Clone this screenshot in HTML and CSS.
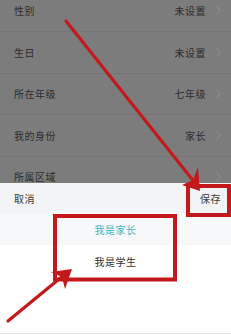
FILE: index.html
```html
<!DOCTYPE html>
<html lang="zh">
<head>
<meta charset="utf-8">
<link rel="stylesheet" href="styles.css">
</head>
<body>
<div class="screen">
  <div class="list">
    <div class="row"><span class="label">性别</span><span class="value">未设置<svg class="chev" viewBox="0 0 5 9"><polyline points="0.5,0.5 4.5,4.5 0.5,8.5"/></svg></span></div>
    <div class="row"><span class="label">生日</span><span class="value">未设置<svg class="chev" viewBox="0 0 5 9"><polyline points="0.5,0.5 4.5,4.5 0.5,8.5"/></svg></span></div>
    <div class="row"><span class="label">所在年级</span><span class="value">七年级<svg class="chev" viewBox="0 0 5 9"><polyline points="0.5,0.5 4.5,4.5 0.5,8.5"/></svg></span></div>
    <div class="row"><span class="label">我的身份</span><span class="value">家长<svg class="chev" viewBox="0 0 5 9"><polyline points="0.5,0.5 4.5,4.5 0.5,8.5"/></svg></span></div>
    <div class="row"><span class="label">所属区域</span><span class="value"><svg class="chev" viewBox="0 0 5 9"><polyline points="0.5,0.5 4.5,4.5 0.5,8.5"/></svg></span></div>
  </div>
  <div class="sheet">
    <div class="sheet-head"><span>取消</span><span>保存</span></div>
    <div class="option active">我是家长</div>
    <div class="option">我是学生</div>
    <div class="sheet-rest"></div>
  </div>
  <svg class="marks" viewBox="0 0 231 335">
    <g fill="none" stroke="#c4191b" stroke-width="4">
      <rect x="55" y="216" width="120" height="63.5"/>
      <rect x="188" y="186" width="41" height="29"/>
    </g>
    <g stroke="#c4191b" stroke-width="3.2" stroke-linecap="round">
      <line x1="66" y1="21" x2="195" y2="183"/>
      <line x1="8" y1="321" x2="64" y2="275"/>
    </g>
    <g fill="#c4191b">
      <polygon points="200,191 198,167 193,180 182,185"/>
      <polygon points="72,269 51,272 62,277 65,289"/>
    </g>
  </svg>
</div>
</body>
</html>
```

FILE: styles.css
```css
html, body {
  margin: 0;
  padding: 0;
}
body {
  width: 231px;
  height: 335px;
  overflow: hidden;
  background: #ffffff;
  font-family: "Noto Sans CJK SC", "Noto Sans", sans-serif;
}
.screen {
  position: relative;
  width: 231px;
  height: 335px;
  display: flex;
  flex-direction: column;
  overflow: hidden;
}
.list {
  height: 183px;
  background: #7c7c7c;
  overflow: hidden;
  flex: none;
}
.row {
  height: 41.5px;
  box-sizing: border-box;
  border-bottom: 1px solid #757575;
  display: flex;
  align-items: center;
  justify-content: space-between;
  padding: 0 10px 0 14px;
  color: #2c2c2c;
  font-size: 10px;
  letter-spacing: 0.5px;
}
.row:first-child {
  margin-top: -9.5px;
}
.value {
  display: flex;
  align-items: center;
  gap: 10px;
}
.chev {
  width: 5px;
  height: 9px;
  fill: none;
  stroke: #939393;
  stroke-width: 0.9;
}
.sheet {
  flex: 1;
  display: flex;
  flex-direction: column;
  background: #ffffff;
}
.sheet-head {
  height: 30px;
  background: #f3f4f6;
  display: flex;
  align-items: center;
  justify-content: space-between;
  padding: 0 10px 0 14px;
  font-size: 10px;
  letter-spacing: 0.5px;
  color: #3a3a3a;
}
.option {
  height: 32px;
  display: flex;
  align-items: center;
  justify-content: center;
  font-size: 10px;
  letter-spacing: 0.5px;
  color: #2f2f2f;
}
.option.active {
  background: #f6f8fa;
  color: #3fb6c2;
}
.sheet-rest {
  flex: 1;
  border-bottom: 1px solid #e4e4e4;
  margin-bottom: 1px;
}
.marks {
  position: absolute;
  left: 0;
  top: 0;
  width: 231px;
  height: 335px;
  pointer-events: none;
}
```
